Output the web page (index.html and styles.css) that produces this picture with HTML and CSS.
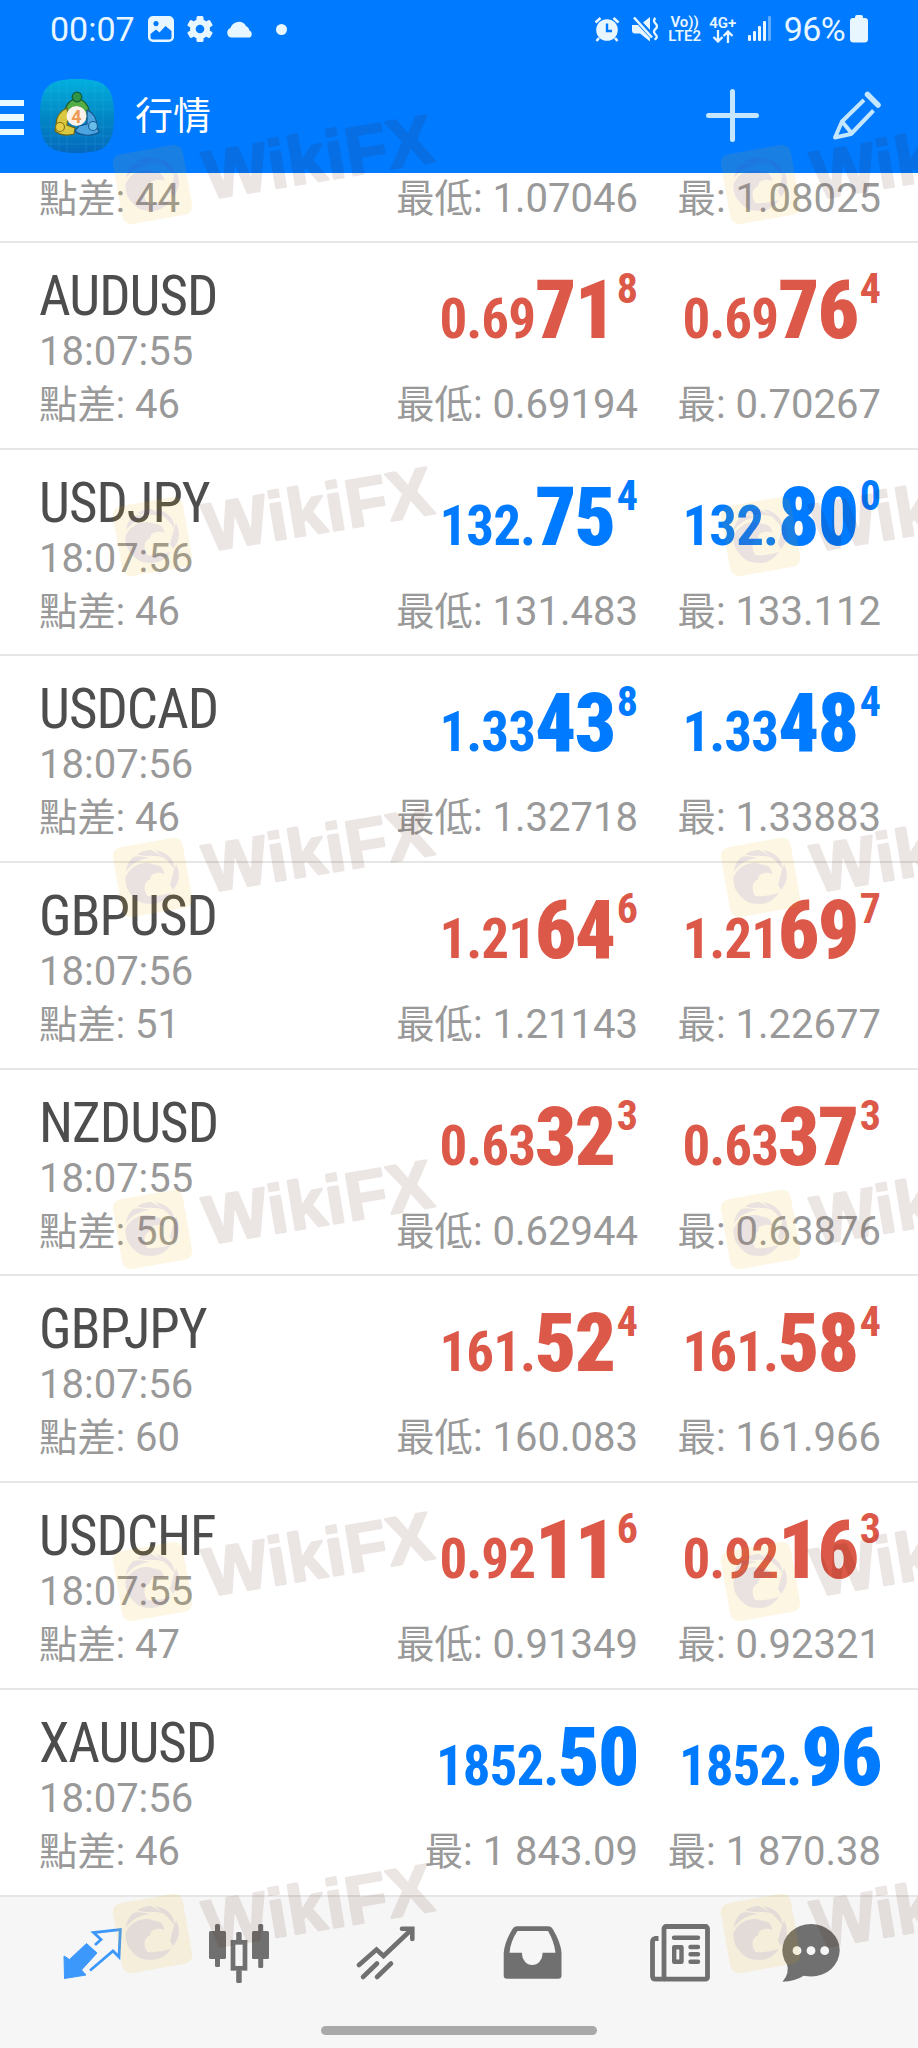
FILE: index.html
```
<!DOCTYPE html>
<html lang="zh-Hant">

<head>
    <meta charset="UTF-8">
    <meta name="viewport" content="width=device-width, initial-scale=1.0">
    <title>行情</title>
    <link rel="stylesheet" href="styles.css">
</head>

<body>
    <div class="screen">
        <header class="header">
            <!-- Status bar -->
            <div class="status-bar">
                <div class="status-left">
                    <span class="clock">00:07</span>
                    <svg class="icon-photo" width="26" height="26" viewBox="0 0 26 26">
                        <path fill="currentColor" fill-rule="evenodd" d="M5 0h16a5 5 0 0 1 5 5v16a5 5 0 0 1-5 5H5a5 5 0 0 1-5-5V5a5 5 0 0 1 5-5zM2.5 18v3a2.500 2.500 0 0 0 2.500 2.500h16a2.500 2.500 0 0 0 2.500-2.500v-6l-6-5-6 6.500-3.500-3zM8 5a2.600 2.600 0 1 0 .01 0z"/>
                    </svg>
                    <svg class="icon-gear" width="26" height="26" viewBox="0 0 26 26">
                        <g fill="currentColor">
                            <rect x="9.500" y="0" width="7" height="26" rx="1.500"/>
                            <rect x="9.500" y="0" width="7" height="26" rx="1.500" transform="rotate(60 13 13)"/>
                            <rect x="9.500" y="0" width="7" height="26" rx="1.500" transform="rotate(120 13 13)"/>
                            <circle cx="13" cy="13" r="10"/>
                        </g>
                        <circle cx="13" cy="13" r="4.300" fill="#007aff"/>
                    </svg>
                    <svg class="icon-cloud" width="28" height="17" viewBox="0 0 28 17">
                        <path fill="currentColor" d="M5 16.500a5 5 0 0 1-.5-9.500A8.500 8.500 0 0 1 20 5a6 6 0 0 1 3.500 4.500A4 4 0 0 1 24 16.500z"/>
                    </svg>
                    <span class="status-dot"></span>
                </div>
                <div class="status-right">
                    <svg width="26" height="26" viewBox="0 0 26 26">
                        <circle cx="13" cy="14" r="10.800" fill="currentColor"/>
                        <path d="M1.500 6.500l5-4.500M24.500 6.500l-5-4.500M5 22l-2.500 3M21 22l2.500 3" stroke="currentColor" stroke-width="2.600" fill="none"/>
                        <path d="M13 7.500v7.500h5" stroke="#007aff" stroke-width="2.400" fill="none"/>
                    </svg>
                    <svg class="icon-mute" width="26" height="26" viewBox="0 0 26 26">
                        <path fill="currentColor" d="M0 9h6l12 13v3.500L8 17.500H3a3 3 0 0 1-3-3zM11 6.500L18 1v13z"/>
                        <path d="M2 1.500l18 20" stroke="currentColor" stroke-width="2.600"/>
                        <path d="M23.500 2q-3 2.500 0 5.500t0 5.500 0 5.500-1 5" stroke="currentColor" stroke-width="2.400" fill="none"/>
                    </svg>
                    <span class="net net-volte"><span>Vo))</span><span>LTE2</span></span>
                    <span class="net net-4g"><span>4G+</span>
                        <svg width="22" height="13" viewBox="0 0 22 13">
                            <path d="M6 0v11M1.500 7L6 11.500 10.500 7M16 13V1.500M11.500 6L16 1.500 20.500 6" stroke="currentColor" stroke-width="2.300" fill="none"/>
                        </svg>
                    </span>
                    <svg class="icon-signal" width="24" height="26" viewBox="0 0 24 26">
                        <g fill="currentColor">
                            <rect x="0" y="19" width="3" height="6" rx="1"/>
                            <rect x="5" y="15" width="3" height="10" rx="1"/>
                            <rect x="10" y="10" width="3" height="15" rx="1"/>
                            <rect x="15" y="5" width="3" height="20" rx="1"/>
                            <rect x="20" y="0" width="3" height="25" rx="1" opacity=".4"/>
                        </g>
                    </svg>
                    <span class="battery-text">96%</span>
                    <svg class="icon-battery" width="18" height="28" viewBox="0 0 18 28">
                        <path fill="currentColor" d="M5 2a2 2 0 0 1 2-2h4a2 2 0 0 1 2 2v1h2a3 3 0 0 1 3 3v18a3.500 3.500 0 0 1-3.500 3.500h-11A3.500 3.500 0 0 1 0 24V6a3 3 0 0 1 3-3h2z"/>
                    </svg>
                </div>
            </div>

            <!-- App bar -->
            <div class="app-bar">
                <div class="menu"><i></i><i></i><i></i></div>
                <svg class="logo" width="74" height="74" viewBox="0 0 74 74">
                    <defs>
                        <linearGradient id="logoBg" x1="0" y1="0" x2="0" y2="1">
                            <stop offset="0" stop-color="#02b0df"/>
                            <stop offset=".5" stop-color="#0288c4"/>
                            <stop offset="1" stop-color="#0568bd"/>
                        </linearGradient>
                    </defs>
                    <path fill="url(#logoBg)" d="M37 0C66 0 74 8 74 37S66 74 37 74 0 66 0 37 8 0 37 0z"/>
                    <path d="M11 5v64M19 2v70M27 1v72M46 1v72M55 2v70M63 5v64M4 12h66M2 21h70M1 30h72M1 48h72M2 57h70M5 65h64" stroke="#3cc0e8" stroke-width=".6" opacity=".35"/>
                    <g stroke-width="1.200">
                        <path d="M24 39c0-9 3-15 8-18h10c5 3 8 9 8 17l-6 2-4-12h-6l-4 12z" fill="#55ad46" stroke="#1c5c30"/>
                        <path d="M27 29c-7 3-11 9-11 17l-1 6c5 4 12 5 19 3l1-6-8-3 1-8z" fill="#d9c840" stroke="#6d6717"/>
                        <path d="M47 31c7 3 10 9 10 17l2 5c-6 4-17 5-24-1l4-5 8-2z" fill="#4ba3df" stroke="#15558c"/>
                        <circle cx="37" cy="18" r="4.800" fill="#2f9448" stroke="#145c33"/>
                        <circle cx="20" cy="48" r="4.500" fill="#e8ce45" stroke="#837519"/>
                        <circle cx="53" cy="47" r="4.500" fill="#68bce9" stroke="#195f98"/>
                    </g>
                    <circle cx="36.500" cy="37" r="10" fill="#fbf3ea"/>
                    <text class="logo-number" x="36.500" y="43.500" text-anchor="middle">4</text>
                </svg>
                <h1 class="title">行情</h1>
                <svg class="icon-add" width="53" height="53" viewBox="0 0 53 53">
                    <path d="M26.500 2.500v48M2.500 26.500h48" stroke="currentColor" stroke-width="5" stroke-linecap="round"/>
                </svg>
                <svg class="icon-edit" width="52" height="52" viewBox="0 0 52 52">
                    <g stroke="currentColor" stroke-width="4" stroke-linejoin="round" fill="none">
                        <path d="M34 10L12 31.500 5 47.500 21 44 43.500 20.500M12 31.500L21.500 43"/>
                        <path d="M37.500 4.500L48 15" stroke-width="5.500" stroke-linecap="round"/>
                    </g>
                </svg>
            </div>
        </header>

        <main class="quotes">
            <!-- Row scrolled under the header -->
            <section class="quote quote-cut">
                <div class="info">
                    <p class="small"><span class="cjk">點差:</span> 44</p>
                </div>
                <div class="price low">
                    <p class="small"><span class="cjk">最低</span>: 1.07046</p>
                </div>
                <div class="price high">
                    <p class="small"><span class="cjk">最</span>: 1.08025</p>
                </div>
            </section>

            <section class="quote down">
                <div class="info">
                    <h2 class="symbol">AUDUSD</h2>
                    <p class="time">18:07:55</p>
                    <p class="small"><span class="cjk">點差:</span> 46</p>
                </div>
                <div class="price low">
                    <p class="value">0.69<b>71</b><sup>8</sup></p>
                    <p class="small"><span class="cjk">最低</span>: 0.69194</p>
                </div>
                <div class="price high">
                    <p class="value">0.69<b>76</b><sup>4</sup></p>
                    <p class="small"><span class="cjk">最</span>: 0.70267</p>
                </div>
            </section>

            <section class="quote up">
                <div class="info">
                    <h2 class="symbol">USDJPY</h2>
                    <p class="time">18:07:56</p>
                    <p class="small"><span class="cjk">點差:</span> 46</p>
                </div>
                <div class="price low">
                    <p class="value">132.<b>75</b><sup>4</sup></p>
                    <p class="small"><span class="cjk">最低</span>: 131.483</p>
                </div>
                <div class="price high">
                    <p class="value">132.<b>80</b><sup>0</sup></p>
                    <p class="small"><span class="cjk">最</span>: 133.112</p>
                </div>
            </section>

            <section class="quote up">
                <div class="info">
                    <h2 class="symbol">USDCAD</h2>
                    <p class="time">18:07:56</p>
                    <p class="small"><span class="cjk">點差:</span> 46</p>
                </div>
                <div class="price low">
                    <p class="value">1.33<b>43</b><sup>8</sup></p>
                    <p class="small"><span class="cjk">最低</span>: 1.32718</p>
                </div>
                <div class="price high">
                    <p class="value">1.33<b>48</b><sup>4</sup></p>
                    <p class="small"><span class="cjk">最</span>: 1.33883</p>
                </div>
            </section>

            <section class="quote down">
                <div class="info">
                    <h2 class="symbol">GBPUSD</h2>
                    <p class="time">18:07:56</p>
                    <p class="small"><span class="cjk">點差:</span> 51</p>
                </div>
                <div class="price low">
                    <p class="value">1.21<b>64</b><sup>6</sup></p>
                    <p class="small"><span class="cjk">最低</span>: 1.21143</p>
                </div>
                <div class="price high">
                    <p class="value">1.21<b>69</b><sup>7</sup></p>
                    <p class="small"><span class="cjk">最</span>: 1.22677</p>
                </div>
            </section>

            <section class="quote down">
                <div class="info">
                    <h2 class="symbol">NZDUSD</h2>
                    <p class="time">18:07:55</p>
                    <p class="small"><span class="cjk">點差:</span> 50</p>
                </div>
                <div class="price low">
                    <p class="value">0.63<b>32</b><sup>3</sup></p>
                    <p class="small"><span class="cjk">最低</span>: 0.62944</p>
                </div>
                <div class="price high">
                    <p class="value">0.63<b>37</b><sup>3</sup></p>
                    <p class="small"><span class="cjk">最</span>: 0.63876</p>
                </div>
            </section>

            <section class="quote down">
                <div class="info">
                    <h2 class="symbol">GBPJPY</h2>
                    <p class="time">18:07:56</p>
                    <p class="small"><span class="cjk">點差:</span> 60</p>
                </div>
                <div class="price low">
                    <p class="value">161.<b>52</b><sup>4</sup></p>
                    <p class="small"><span class="cjk">最低</span>: 160.083</p>
                </div>
                <div class="price high">
                    <p class="value">161.<b>58</b><sup>4</sup></p>
                    <p class="small"><span class="cjk">最</span>: 161.966</p>
                </div>
            </section>

            <section class="quote down">
                <div class="info">
                    <h2 class="symbol">USDCHF</h2>
                    <p class="time">18:07:55</p>
                    <p class="small"><span class="cjk">點差:</span> 47</p>
                </div>
                <div class="price low">
                    <p class="value">0.92<b>11</b><sup>6</sup></p>
                    <p class="small"><span class="cjk">最低</span>: 0.91349</p>
                </div>
                <div class="price high">
                    <p class="value">0.92<b>16</b><sup>3</sup></p>
                    <p class="small"><span class="cjk">最</span>: 0.92321</p>
                </div>
            </section>

            <section class="quote up">
                <div class="info">
                    <h2 class="symbol">XAUUSD</h2>
                    <p class="time">18:07:56</p>
                    <p class="small"><span class="cjk">點差:</span> 46</p>
                </div>
                <div class="price low">
                    <p class="value">1852.<b>50</b></p>
                    <p class="small"><span class="cjk">最</span>: 1 843.09</p>
                </div>
                <div class="price high">
                    <p class="value">1852.<b>96</b></p>
                    <p class="small"><span class="cjk">最</span>: 1 870.38</p>
                </div>
            </section>
        </main>

        <footer class="footer">
            <nav class="tabs">
                <svg class="tab active" viewBox="0 0 60 60">
                    <path fill="currentColor" stroke="currentColor" stroke-linejoin="round" d="M2 32l5.500 3.500 17-16L35 29 19.500 46l4.500 5-21.500 3.500z"/>
                    <path fill="none" stroke="currentColor" stroke-width="2.800" d="M33 21l6-5.500-7.500-7L58.300 5.500 57 33l-6-6-23 19.500"/>
                </svg>
                <svg class="tab" viewBox="0 0 60 60">
                    <g fill="currentColor">
                        <rect x="0" y="7" width="17" height="28" rx="1.500"/>
                        <rect x="6" y="0" width="5" height="43" rx="1.500"/>
                        <rect x="43" y="7" width="17" height="28" rx="1.500"/>
                        <rect x="49.200" y="0" width="5" height="44" rx="1.500"/>
                        <rect x="27.200" y="8" width="5.500" height="9" rx="1.500"/>
                        <rect x="27.200" y="46" width="5.500" height="13" rx="1.500"/>
                    </g>
                    <rect x="24" y="18.300" width="12" height="26" fill="none" stroke="currentColor" stroke-width="4.700"/>
                </svg>
                <svg class="tab" viewBox="0 0 60 60">
                    <g fill="none" stroke="currentColor" stroke-width="4.600" stroke-linecap="round">
                        <path d="M3 41l17.500-15.500 7 6.500L55.500 5.500M46 4.800h10.300V15"/>
                        <path d="M7 53l14-13.500M21 53l14-13.500"/>
                    </g>
                </svg>
                <svg class="tab" viewBox="0 0 60 60">
                    <path fill="currentColor" fill-rule="evenodd" d="M14 2.300h31.500q3 0 4.300 2.700Q58 19 58.500 29v22.500q0 3.200-3.200 3.200H4q-3.300 0-3.300-3.200V29Q1.500 18 9.500 5q1.300-2.700 4.500-2.700zM14.500 7Q7.500 17 6.500 28.700H19V30a10.200 11 0 0 0 20.500 0v-1.300h13Q51 17 45 7z"/>
                </svg>
                <svg class="tab" viewBox="0 0 60 60">
                    <g fill="none" stroke="currentColor" stroke-width="4.800">
                        <rect x="14" y="2.500" width="43.500" height="52.700" rx="2"/>
                        <path d="M8.500 14.500H5q-2.500.5-2.500 3.500v34q0 3.200 3 3.200H15"/>
                        <path d="M24 13.700h24M40.500 23h7.500M40.500 30.300H48M40.500 37.700H48" stroke-linecap="round" stroke-width="4.400"/>
                        <rect x="24.200" y="23.200" width="7.300" height="14.500" stroke-linejoin="round" stroke-width="4.400"/>
                    </g>
                </svg>
                <svg class="tab tab-last" viewBox="0 0 60 60">
                    <ellipse cx="30" cy="26.300" rx="28.700" ry="26.300" fill="currentColor"/>
                    <path fill="currentColor" d="M6 40q3 9-4.500 17.700Q14 57.500 24 51z"/>
                    <g fill="#f6f6f6">
                        <circle cx="16" cy="26.700" r="4.400"/>
                        <circle cx="30" cy="26.700" r="4.400"/>
                        <circle cx="43.700" cy="26.700" r="4.400"/>
                    </g>
                </svg>
            </nav>
            <div class="home-handle"></div>
        </footer>

        <!-- Watermark layer -->
        <svg class="watermark" width="918" height="2048" viewBox="0 0 918 2048">
            <defs>
                <g id="mark">
                    <g transform="rotate(-10 40.500 40.500)">
                        <rect x="5" y="5" width="71" height="71" rx="9" fill="#e6aa00" opacity=".11"/>
                    </g>
                    <g fill="#503cc8" opacity=".1">
                        <path d="M25 17.500Q31 13 39 13l15 8q-9-3-21-2zM43 13q13 2 18 12l2 8q-6-9-20-20zM64 27q7 14-3 26l-3-5q3-12 6-21zM59 56Q50 68 38 67l-3-8q12 1 24-3z"/>
                        <path d="M21 20q7-2 16 1-13 1-23 13 1-8 7-14zM13.500 40Q18 31 25 28q10-4 18 0 8 0 9.500 9-4-2-8-1-7 1-6 6-6 2-6 9t9 15q-12 3-20-6-9-8-8-20z"/>
                    </g>
                    <text class="mark-text" x="96" y="55.500" textLength="231" transform="rotate(-9.500 96 55.500)">WikiFX</text>
                </g>
                <g id="markRow">
                    <use href="#mark"/>
                    <use href="#mark" x="608"/>
                </g>
            </defs>
            <use href="#markRow" x="112" y="144"/>
            <use href="#markRow" x="112" y="496"/>
            <use href="#markRow" x="112" y="837"/>
            <use href="#markRow" x="112" y="1189"/>
            <use href="#markRow" x="112" y="1541"/>
            <use href="#markRow" x="112" y="1893"/>
        </svg>
    </div>
</body>

</html>
```
FILE: styles.css
```
/* Reset some default styles */
body, h1, h2, p {
    margin: 0;
    padding: 0;
    font-weight: normal;
}

body {
    font-family: Roboto, "Noto Sans CJK TC", sans-serif;
    background-color: #fff;
    color: #999;
}

svg {
    display: block;
    flex: none;
}

.screen {
    position: relative;
    width: 918px;
    height: 2048px;
    overflow: hidden;
    display: flex;
    flex-direction: column;
}

/* Header styles */
.header {
    height: 173px;
    background-color: #007aff;
    color: #e8f6ff;
}

.status-bar {
    display: flex;
    justify-content: space-between;
    height: 58px;
    padding: 0 50px 0 50px;
}

.status-left,
.status-right {
    display: flex;
    align-items: center;
}

.clock,
.battery-text {
    font-size: 34px;
    line-height: 58px;
}

.icon-photo {
    margin-left: 13px;
}

.icon-gear {
    margin-left: 13px;
}

.icon-cloud {
    margin-left: 13px;
}

.status-dot {
    width: 11px;
    height: 11px;
    margin-left: 22px;
    border-radius: 50%;
    background-color: #e8f6ff;
}

.icon-mute {
    margin-left: 12px;
}

.net {
    display: flex;
    flex-direction: column;
    align-items: center;
    font-size: 15px;
    line-height: 14px;
    font-weight: 600;
}

.net-volte {
    width: 36px;
    margin-left: 9px;
}

.net-4g {
    width: 30px;
    margin-left: 5px;
}

.icon-signal {
    margin-left: 10px;
}

.battery-text {
    margin-left: 12px;
    letter-spacing: -0.6px;
}

.icon-battery {
    margin-left: 5px;
}

.app-bar {
    display: flex;
    align-items: center;
    height: 115px;
    color: #c4e6ff;
}

.menu {
    display: flex;
    flex-direction: column;
    gap: 8px;
    width: 24px;
    margin-top: 4px;
}

.menu i {
    height: 6.5px;
    background-color: #e8f9ff;
}

.logo {
    margin-left: 16px;
}

.logo-number {
    font: bold 18px Roboto, sans-serif;
    fill: #ef9a55;
}

.title {
    flex: 1;
    margin-left: 21px;
    font-size: 38px;
    line-height: 56px;
    color: #fff;
}

.icon-edit {
    margin: 0 36px 0 71px;
}

/* Quote list */
.quotes {
    height: 1724px;
}

.quote {
    display: flex;
    box-sizing: border-box;
    height: 206.7px;
    padding: 0 37px 0 39px;
    border-bottom: 2px solid #e6e6e6;
}

.info {
    width: 250px;
    padding-top: 21px;
}

.symbol {
    font-family: "Roboto Condensed", Roboto, sans-serif;
    font-size: 55px;
    line-height: 64px;
    letter-spacing: -1px;
    color: #4d4d4d;
}

.time,
.small {
    font-size: 40px;
    line-height: 48px;
    white-space: nowrap;
}

.info .small {
    margin-top: 5px;
}

.cjk {
    font-size: 38.4px;
}

.price {
    padding-top: 36px;
    text-align: right;
}

.low {
    flex: 1;
}

.high {
    width: 243px;
}

.value {
    height: 80px;
    margin-bottom: 22px;
    font-family: "Roboto Condensed", Roboto, sans-serif;
    font-size: 55px;
    font-weight: bold;
    line-height: 80px;
    letter-spacing: -1px;
    white-space: nowrap;
}

.value b {
    font-size: 81px;
    line-height: 0;
    letter-spacing: -1.5px;
}

.value sup {
    margin-left: 2px;
    font-size: 42px;
    line-height: 0;
    letter-spacing: 0;
    vertical-align: 35px;
}

.up .value {
    color: #007aff;
}

.down .value {
    color: #dc5848;
}

/* Only the bottom line of this row is visible */
.quote-cut {
    height: 70px;
}

.quote-cut .info,
.quote-cut .price {
    padding-top: 2px;
}

.quote-cut .small {
    margin-top: 0;
}

/* Bottom tabs */
.footer {
    flex: 1;
    background-color: #f6f6f6;
}

.tabs {
    display: flex;
    gap: 87px;
    padding: 27px 0 0 62px;
}

.tab {
    width: 60px;
    height: 60px;
    color: #707070;
}

.tab.active {
    color: #3d98fc;
}

.tab-last {
    margin-left: -16px;
}

.home-handle {
    width: 276px;
    height: 9px;
    margin: 42px auto 0;
    border-radius: 5px;
    background-color: #a9a9a9;
}

.watermark {
    position: absolute;
    top: 0;
    left: 0;
    pointer-events: none;
}

.mark-text {
    font: bold 68px "Liberation Sans", Arial, sans-serif;
    fill: #4b1400;
    stroke: #4b1400;
    stroke-width: 2.5px;
    stroke-linejoin: round;
    opacity: 0.106;
}
```
